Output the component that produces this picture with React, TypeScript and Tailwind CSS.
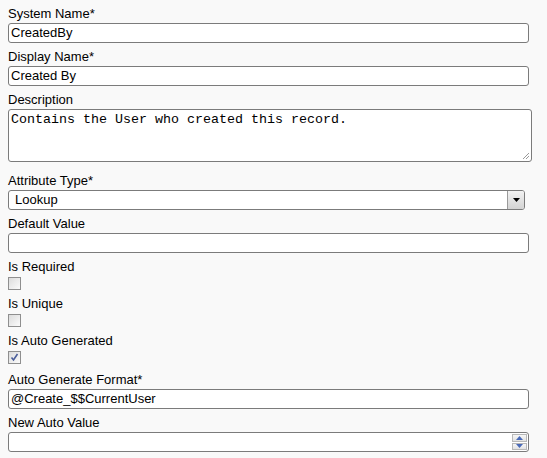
import React from 'react'

const Label = ({ children }: { children: React.ReactNode }) => (
  <label className="block text-[13px] leading-[15px] text-black">{children}</label>
)

const TextBox = ({ value, className = '' }: { value?: string; className?: string }) => (
  <div
    className={`mt-[2px] mb-[6px] h-[20px] w-[521px] border border-[#7b7b7b] rounded-[3px] bg-white pl-[2px] text-[13px] leading-[18px] text-black ${className}`}
  >
    {value}
  </div>
)

const CheckBox = ({ checked, className = '' }: { checked?: boolean; className?: string }) => (
  <div
    className={`mt-[3px] mb-[6px] w-[13px] h-[13px] border border-[#8f8f8f] bg-gradient-to-br from-[#dcdcdc] to-[#fbfbfb] flex items-center justify-center ${className}`}
  >
    {checked && (
      <svg width="9" height="9" viewBox="0 0 9 9">
        <path d="M1.5 4.5 L3.5 7 L7.5 1" fill="none" stroke="#4a5d9a" strokeWidth="1.6" />
      </svg>
    )}
  </div>
)

export default function App() {
  return (
    <div className="min-h-screen bg-[#f9f9f9] px-2 pt-[6px] font-['Liberation_Sans',Arial,sans-serif]">
      <Label>System Name*</Label>
      <TextBox value="CreatedBy" />
      <Label>Display Name*</Label>
      <TextBox value="Created By" />
      <Label>Description</Label>
      <div className="mt-[2px] mb-[11px] h-[53px] w-[524px] border border-[#7b7b7b] rounded-[3px] bg-white px-[2px] pt-[2px] relative font-['Liberation_Mono','Courier_New',monospace] text-[13.33px] leading-[15px] text-black">
        Contains the User who created this record.
        <svg className="absolute right-[1px] bottom-[1px]" width="9" height="9" viewBox="0 0 9 9">
          <path d="M8 2 L2 8 M8 5 L5 8" stroke="#9a9a9a" strokeWidth="1" />
        </svg>
      </div>
      <Label>Attribute Type*</Label>
      <div className="mt-[2px] mb-[6px] h-[20px] w-[517px] border border-[#7b7b7b] rounded-[3px] bg-white flex text-[13px] leading-[18px] text-black">
        <span className="flex-1 pl-[6px]">Lookup</span>
        <span className="w-[17px] h-full border-l border-[#9a9a9a] bg-gradient-to-b from-[#f2f2f2] to-[#d3d3d3] rounded-r-[2px] flex items-center justify-center">
          <svg width="7" height="4" viewBox="0 0 7 4">
            <path d="M0 0 H7 L3.5 4 Z" fill="#000" />
          </svg>
        </span>
      </div>
      <Label>Default Value</Label>
      <TextBox />
      <Label>Is Required</Label>
      <CheckBox />
      <Label>Is Unique</Label>
      <CheckBox />
      <Label>Is Auto Generated</Label>
      <CheckBox checked className="mb-[8px]" />
      <Label>Auto Generate Format*</Label>
      <TextBox value="@Create_$$CurrentUser" />
      <Label>New Auto Value</Label>
      <div className="mt-[2px] h-[20px] w-[521px] border border-[#7b7b7b] rounded-[3px] bg-white flex justify-end items-stretch">
        <div className="w-[15px] my-[1px] mr-[1px] flex flex-col gap-[1px]">
          <span className="flex-1 border border-[#b8b8b8] bg-gradient-to-b from-[#f7f7f7] to-[#e2e2e2] flex items-center justify-center">
            <svg width="7" height="4" viewBox="0 0 7 4">
              <path d="M0 4 H7 L3.5 0 Z" fill="#4a6ab8" />
            </svg>
          </span>
          <span className="flex-1 border border-[#b8b8b8] bg-gradient-to-b from-[#f7f7f7] to-[#e2e2e2] flex items-center justify-center">
            <svg width="7" height="4" viewBox="0 0 7 4">
              <path d="M0 0 H7 L3.5 4 Z" fill="#4a6ab8" />
            </svg>
          </span>
        </div>
      </div>
    </div>
  )
}
